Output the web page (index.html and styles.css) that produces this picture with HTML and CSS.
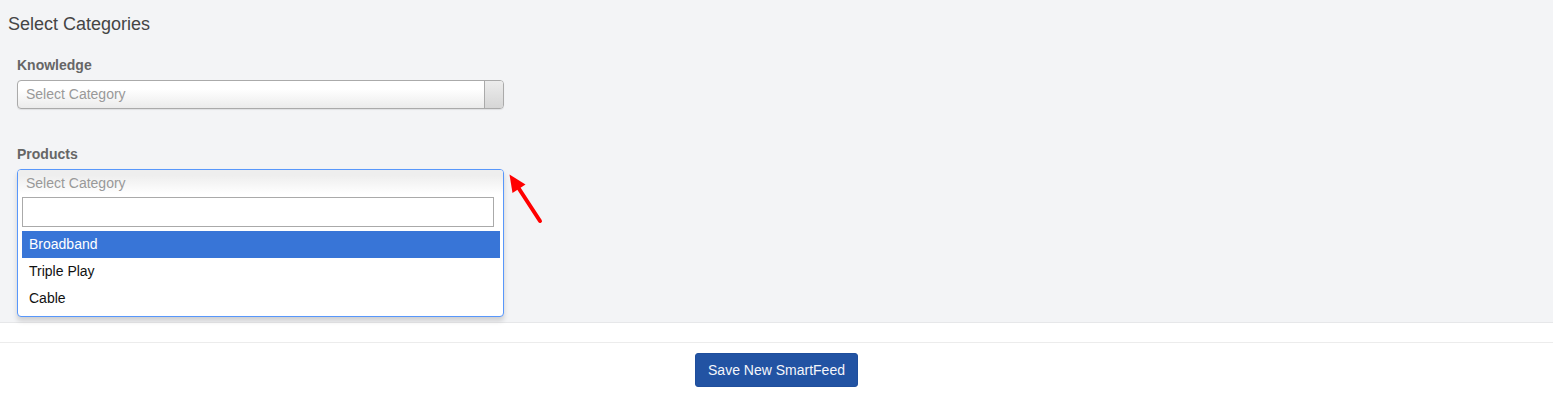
FILE: index.html
```html
<!DOCTYPE html>
<html>
<head>
<meta charset="utf-8">
<link rel="stylesheet" href="styles.css">
</head>
<body>
<div class="panel">
  <h3 class="title">Select Categories</h3>
  <div class="fields">
    <div class="field">
      <label class="label">Knowledge</label>
      <div class="chosen">
        <span class="chosen-text">Select Category</span>
        <span class="chosen-arrow"></span>
      </div>
    </div>
    <div class="field field-open">
      <label class="label">Products</label>
      <div class="chosen-open">
        <div class="chosen-single">Select Category</div>
        <div class="chosen-search"><input class="search-input" type="text"></div>
        <ul class="results">
          <li class="result highlighted">Broadband</li>
          <li class="result">Triple Play</li>
          <li class="result">Cable</li>
        </ul>
      </div>
      <svg class="annot-arrow" width="50" height="60" viewBox="0 0 50 60">
        <line x1="18.5" y1="21" x2="40" y2="54" stroke="#ff0000" stroke-width="4" stroke-linecap="round"/>
        <polygon points="9.5,7.5 12.5,26 25.5,17.5" fill="#ff0000"/>
      </svg>
    </div>
  </div>
</div>
<div class="gap"></div>
<div class="footer">
  <button class="btn-save" type="button">Save New SmartFeed</button>
</div>
</body>
</html>
```

FILE: styles.css
```css
html, body {
  margin: 0;
  padding: 0;
  background: #ffffff;
  font-family: "Liberation Sans", Arial, sans-serif;
}

.panel {
  background: #f3f4f6;
  padding: 14px 0 5px 8px;
  border-bottom: 1px solid #e6e7e9;
}

.title {
  margin: 0 0 21px 0;
  font-size: 18px;
  line-height: 20px;
  font-weight: normal;
  color: #454545;
}

.fields {
  margin-left: 9px;
  width: 487px;
}

.field {
  margin-bottom: 35px;
}

.field-open {
  margin-bottom: 0;
  position: relative;
}

.label {
  display: block;
  font-size: 14px;
  line-height: 20px;
  font-weight: bold;
  color: #666666;
  margin-bottom: 5px;
}

.chosen {
  box-sizing: border-box;
  height: 29px;
  display: flex;
  border: 1px solid #aaaaaa;
  border-radius: 4px;
  background: linear-gradient(#ffffff 30%, #f4f4f4 70%, #ebebeb 100%);
  box-shadow: 0 1px 1px rgba(0, 0, 0, 0.08);
  overflow: hidden;
}

.chosen-text {
  flex: 1;
  padding-left: 8px;
  font-size: 14px;
  line-height: 27px;
  color: #999999;
}

.chosen-arrow {
  width: 18px;
  border-left: 1px solid #aaaaaa;
  background: linear-gradient(#ececec, #d6d6d6);
}

.chosen-open {
  box-sizing: border-box;
  border: 1px solid #5897fb;
  border-radius: 4px;
  background: #ffffff;
  box-shadow: 0 4px 5px rgba(0, 0, 0, 0.15);
}

.chosen-single {
  height: 27px;
  padding-left: 8px;
  font-size: 14px;
  line-height: 26px;
  color: #999999;
  background: linear-gradient(#eeeeee 20%, #ffffff 90%);
  border-radius: 3px 3px 0 0;
}

.chosen-search {
  padding: 0 4px 4px 4px;
}

.search-input {
  display: block;
  box-sizing: border-box;
  width: 472px;
  height: 30px;
  margin: 0;
  padding: 4px 5px;
  border: 1px solid #aaaaaa;
  border-radius: 0;
  font-family: "Liberation Sans", Arial, sans-serif;
  font-size: 14px;
  outline: none;
}

.results {
  list-style: none;
  margin: 0 3px 4px 4px;
  padding: 0;
}

.result {
  height: 27px;
  box-sizing: border-box;
  padding: 6px 7px;
  font-size: 14px;
  line-height: 15px;
  color: #111111;
}

.highlighted {
  background: #3875d7;
  color: #ffffff;
}

.annot-arrow {
  position: absolute;
  left: 483px;
  top: 23px;
}

.gap {
  height: 19px;
  background: #ffffff;
}

.footer {
  border-top: 1px solid #ececec;
  padding-top: 10px;
  display: flex;
  justify-content: center;
}

.btn-save {
  box-sizing: border-box;
  height: 34px;
  padding: 0 12px;
  border: 1px solid #1f4e9c;
  border-radius: 3px;
  background: #2253a3;
  color: #f4f6fb;
  font-family: "Liberation Sans", Arial, sans-serif;
  font-size: 14px;
  line-height: 20px;
}
```
